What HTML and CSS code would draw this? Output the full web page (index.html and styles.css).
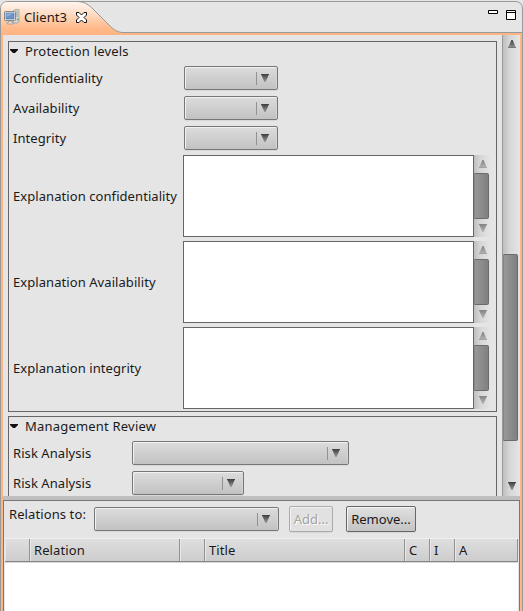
FILE: index.html
```html
<!DOCTYPE html>
<html lang="en">
<head>
<meta charset="utf-8">
<title>Client3</title>
<link rel="stylesheet" href="styles.css">
</head>
<body>
<svg width="0" height="0" class="defs">
  <defs>
    <linearGradient id="arrow" x1="0" y1="0" x2="0" y2="1"><stop offset="0" stop-color="#3c3c3c"/><stop offset="1" stop-color="#999"/></linearGradient>
    <symbol id="down" viewBox="0 0 8 8"><path d="M0 0H8L4.6 8H3.4Z" fill="url(#arrow)"/><path d="M0 .5H8" stroke="#444"/></symbol>
    <symbol id="up" viewBox="0 0 8 8"><path d="M3.4 0H4.6L8 8H0Z" fill="url(#arrow)"/><path d="M0 7.5H8" stroke="#777"/></symbol>
    <symbol id="twistie" viewBox="0 0 8 4"><path d="M0 0H8V1L5 4H3L0 1Z" fill="#111"/></symbol>
  </defs>
</svg>
<div class="window">
  <header class="tabs">
    <svg class="tab-shape" width="523" height="35" viewBox="0 0 523 35">
      <defs><linearGradient id="tab" x1="0" y1="0" x2="0" y2="1"><stop offset="0" stop-color="#fff6f0"/><stop offset=".35" stop-color="#ffdcc4"/><stop offset=".8" stop-color="#ffb989"/><stop offset="1" stop-color="#ffb583"/></linearGradient></defs>
      <path d="M.5 35V9Q.5 1.500 8 1.500H515Q522.500 1.500 522.500 9V35Z" fill="#e5e5e5" stroke="#999"/>
      <path d="M1 35V9Q1 2 8 2H78C85 2 89 5 93 9L109 25C114 30 118 32 123 32.500V35Z" fill="url(#tab)"/>
      <path d="M1 33H522V35H1Z" fill="#ffb583"/>
      <path d="M78 1.500C85 2 89 5 93 9L109 25C114 30 118 32.500 123 32.500H522" fill="none" stroke="#999"/>
    </svg>
    <div class="tab">
      <svg width="16" height="16" viewBox="0 0 16 16">
        <path d="M9 2L11 .5H15V13L13 14H9Z" fill="#d4d7d4" stroke="#999" stroke-width=".7"/>
        <path d="M11.500 3H14M11.500 5H14M11.500 7H14" stroke="#8a9a80" stroke-width=".8"/><path d="M13 10.500h1.500" stroke="#48a928" stroke-width="1.500"/>
        <rect x=".5" y="2.500" width="11" height="9" rx=".7" fill="#eee" stroke="#888"/>
        <rect x="2" y="4" width="8" height="6" fill="#6d94ca" stroke="#4a6c9c" stroke-width=".6"/><path d="M2.500 8V4.500H9Z" fill="#8db2e2"/>
        <path d="M4.500 12H8V13.500H9.500V15H3V13.500H4.500Z" fill="#ddd" stroke="#888" stroke-width=".6"/>
      </svg>
      <span>Client3</span>
      <svg class="close" width="11" height="11" viewBox="0 0 11 11"><path d="M.5 .5H3L5.500 3L8 .5H10.500V3L8 5.500L10.500 8V10.500H8L5.500 8L3 10.500H.5V8L3 5.500L.5 3Z" fill="#fff" stroke="#111"/></svg>
    </div>
    <svg class="controls" width="28" height="10" viewBox="0 0 28 10"><path d="M.5 .5H9.500V3.500H.5ZM18.500 .5H27.500V9.500H18.500ZM18.500 2.500H27.500" fill="#fff" stroke="#000"/></svg>
  </header>
  <main class="frame">
    <div class="scroller">
      <div class="form">
        <section class="section">
          <h2><svg width="8" height="4"><use href="#twistie"/></svg>Protection levels</h2>
          <div class="row"><label>Confidentiality</label><div class="combo small"><svg width="8" height="8"><use href="#down"/></svg></div></div>
          <div class="row"><label>Availability</label><div class="combo small"><svg width="8" height="8"><use href="#down"/></svg></div></div>
          <div class="row"><label>Integrity</label><div class="combo small"><svg width="8" height="8"><use href="#down"/></svg></div></div>
          <div class="row area"><label>Explanation confidentiality</label><div class="text"></div><div class="bar faded"><svg width="8" height="8"><use href="#up"/></svg><i></i><svg width="8" height="8"><use href="#down"/></svg></div></div>
          <div class="row area"><label>Explanation Availability</label><div class="text"></div><div class="bar faded"><svg width="8" height="8"><use href="#up"/></svg><i></i><svg width="8" height="8"><use href="#down"/></svg></div></div>
          <div class="row area"><label>Explanation integrity</label><div class="text"></div><div class="bar faded"><svg width="8" height="8"><use href="#up"/></svg><i></i><svg width="8" height="8"><use href="#down"/></svg></div></div>
        </section>
        <section class="section review">
          <h2><svg width="8" height="4"><use href="#twistie"/></svg>Management Review</h2>
          <div class="row"><label>Risk Analysis</label><div class="combo wide"><svg width="8" height="8"><use href="#down"/></svg></div></div>
          <div class="row"><label>Risk Analysis</label><div class="combo medium"><svg width="8" height="8"><use href="#down"/></svg></div></div>
        </section>
      </div>
      <div class="bar main-bar"><svg width="8" height="8"><use href="#up"/></svg><i></i><svg width="8" height="8"><use href="#down"/></svg></div>
    </div>
    <div class="sash"></div>
    <div class="relations">
      <div class="tools">
        <label>Relations to:</label>
        <div class="combo target"><svg width="8" height="8"><use href="#down"/></svg></div>
        <button class="add" disabled>Add...</button>
        <button class="remove">Remove...</button>
      </div>
      <div class="table">
        <div class="head"><span></span><span>Relation</span><span></span><span>Title</span><span>C</span><span>I</span><span>A</span></div>
      </div>
    </div>
  </main>
</div>
</body>
</html>
```

FILE: styles.css
```css
* { box-sizing: border-box; }
body { margin: 0; background: #e5e5e5; font: 13px/18px "Noto Sans", sans-serif; color: #1a1a1a; overflow: hidden; }
svg { display: block; flex: none; }
.defs { position: absolute; }
.window { width: 523px; height: 611px; display: flex; flex-direction: column; }
.tabs { position: relative; height: 35px; flex: none; display: flex; justify-content: space-between; padding: 9px 7px 0 4px; }
.tab-shape { position: absolute; inset: 0; }
.tab { position: relative; display: flex; height: 16px; align-items: center; }
.tab span { margin-left: 4px; width: 44px; white-space: nowrap; letter-spacing: .1px; }
.close { margin-left: 8px; }
.controls { position: relative; margin-top: 1px; }
.frame { flex: 1; min-height: 0; display: flex; flex-direction: column; border: solid #999; border-width: 0 1px; box-shadow: inset 2px 0 #ffb583, inset -2px 0 #ffb583; padding: 0 2px; }
.scroller { height: 461px; flex: none; display: flex; overflow: hidden; }
.form { flex: 1; padding: 6px 5px 0; }
.section { height: 371px; border: 1px solid #666; padding-left: 4px; }
h2 { margin: 0 0 0 -3px; height: 24px; font: inherit; letter-spacing: .2px; display: flex; gap: 7px; align-items: center; padding-bottom: 6px; }
.row { display: flex; align-items: center; height: 24px; margin-bottom: 6px; }
.row label { width: 171px; flex: none; white-space: nowrap; letter-spacing: .07px; }
.combo { height: 24px; border: 1px solid #777; border-radius: 2px; background: linear-gradient(#dcdcdc, #c2c2c2); box-shadow: inset 1px 1px #f1f1f1, inset -1px 0 #d5d5d5, 0 1px #d8d8d8; display: flex; align-items: center; justify-content: flex-end; padding-right: 8px; flex: none; }
.combo::before { content: ""; height: 13px; border-left: 1px solid #929292; margin-right: 4px; }
.combo svg { margin-top: -1px; }
.small { width: 94px; }
.wide { width: 217px; }
.medium { width: 112px; }
.area { height: 82px; margin-bottom: 4px; }
.row:nth-of-type(3) { margin-bottom: 5px; }
.area label { width: 170px; }
.text { width: 291px; height: 82px; border: 1px solid #666; background: #fff; flex: none; }
.bar { display: flex; flex-direction: column; align-items: center; background: linear-gradient(90deg, #bfbfbf, #d7d7d7 40%, #e5e5e5); width: 17px; }
.bar i { width: 100%; border: 1px solid #6b6b6b; border-left-color: #858585; border-radius: 0 2px 2px 0; background: linear-gradient(90deg, #989898, #808080); }
.faded { height: 82px; padding: 5px 0; }
.faded svg { opacity: .55; }
.faded i { height: 46px; width: 15px; margin: 5px 2px 5px 0; }
.review { margin-top: 4px; height: 100px; }
.review label { width: 119px; }
.main-bar { border-left: 1px solid #999; width: 18px; padding-top: 5px; }
.main-bar i { height: 187px; width: 15px; margin: 206px 2px 41px 0; }
.sash { height: 4px; background: #bfbfbf; flex: none; }
.relations { flex: 1; border: solid #777; border-width: 1px 1px 0; display: flex; flex-direction: column; }
.tools { height: 37px; padding: 5px 5px 0; display: flex; }
.tools label { width: 85px; height: 18px; margin-top: -1px; white-space: nowrap; letter-spacing: .1px; }
.target { width: 185px; margin-top: 1px; }
button { height: 26px; padding: 0; border: 1px solid #666; border-radius: 2px; background: linear-gradient(#e0e0e0, #c4c4c4); box-shadow: inset 1px 1px #f3f3f3, 0 1px #d7d7d7; font: inherit; color: #1a1a1a; }
.add { width: 44px; margin-left: 10px; border-color: #aaa; background: #e1e1e1; color: #a3a3a3; text-shadow: 1px 1px #fff; }
.remove { width: 70px; margin-left: 13px; }
.table { flex: 1; margin: 0 1px; background: #fff; }
.head { height: 24px; border-top: 1px solid #efefef; border-bottom: 1px solid #858585; background: linear-gradient(#dedede, #cdcdcd); box-shadow: 0 1px #d8d8d8; display: grid; grid-template-columns: 25px 150px 25px 200px 25px 25px 1fr; letter-spacing: .1px; }
.head span { border-right: 1px solid #929292; box-shadow: inset 1px 0 #e8e8e8; padding: 2px 0 0 4px; }
```
